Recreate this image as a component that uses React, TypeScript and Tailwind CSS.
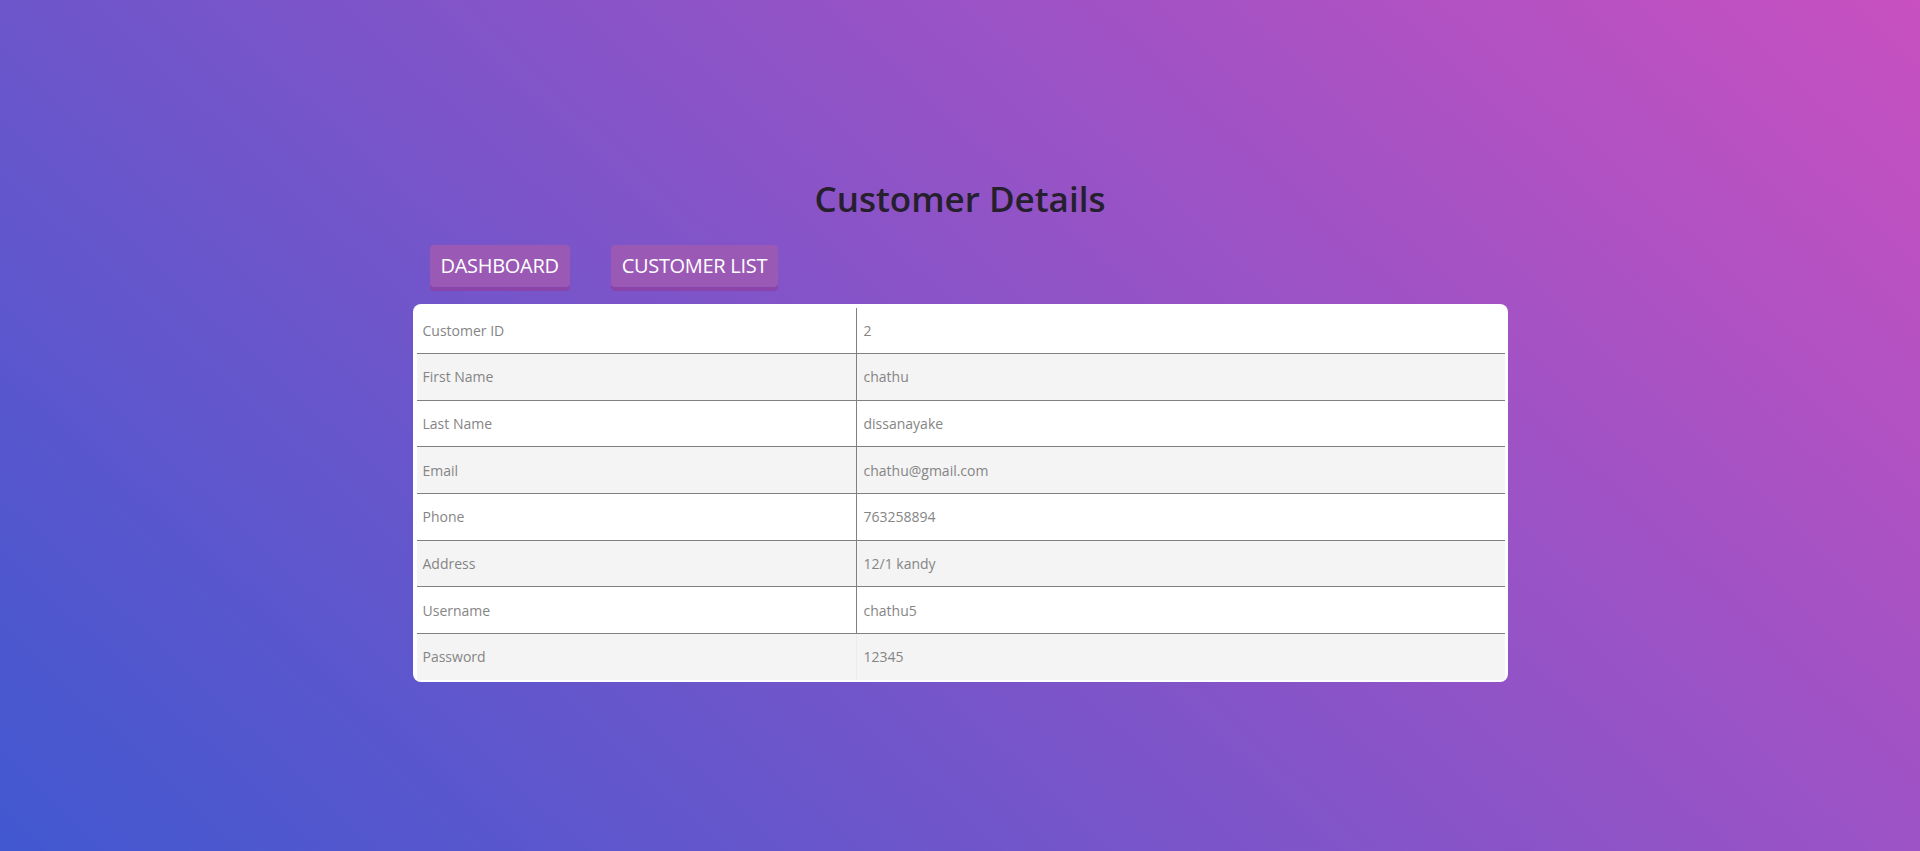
const rows = [
  { label: "Customer ID", value: "2" },
  { label: "First Name", value: "chathu" },
  { label: "Last Name", value: "dissanayake" },
  { label: "Email", value: "chathu@gmail.com" },
  { label: "Phone", value: "763258894" },
  { label: "Address", value: "12/1 kandy" },
  { label: "Username", value: "chathu5" },
  { label: "Password", value: "12345" },
];

function NavButton({ children }: { children: string }) {
  return (
    <button className="h-[42px] px-[11px] flex items-center rounded-[4px] bg-[#9b59b6] shadow-[0_4px_0_#8a44aa] text-white text-[20px] tracking-[-0.3px] uppercase">
      {children}
    </button>
  );
}

export default function App() {
  return (
    <div className="min-h-screen bg-[linear-gradient(43deg,#4158d0,#c850c0)] font-['Open_Sans',sans-serif] pt-[177px]">
      <h1 className="text-center text-[35px] leading-[44px] font-semibold text-[#26202e]">
        Customer Details
      </h1>
      <div className="w-[1095px] mx-auto">
        <div className="flex gap-[41px] pl-[17px] mt-[24px]">
          <NavButton>Dashboard</NavButton>
          <NavButton>Customer List</NavButton>
        </div>
        <div className="mt-[17px] bg-white rounded-[8px] pt-[4px] pl-[4px] pr-[3px] pb-[2px]">
          {rows.map((row, i) => {
            const last = i === rows.length - 1;
            return (
              <div
                key={row.label}
                className={`grid grid-cols-[440px_1fr] text-[14px] text-[#858585] ${
                  i % 2 === 1 ? "bg-[#f4f4f4]" : "bg-white"
                } ${i > 0 ? "h-[46.7px] border-t border-[#808080]" : "h-[45px]"}`}
              >
                <div
                  className={`flex items-center pl-[6px] border-r ${
                    last ? "border-[#ececec]" : "border-[#808080]"
                  }`}
                >
                  {row.label}
                </div>
                <div className="flex items-center pl-[7px]">{row.value}</div>
              </div>
            );
          })}
        </div>
      </div>
    </div>
  );
}
